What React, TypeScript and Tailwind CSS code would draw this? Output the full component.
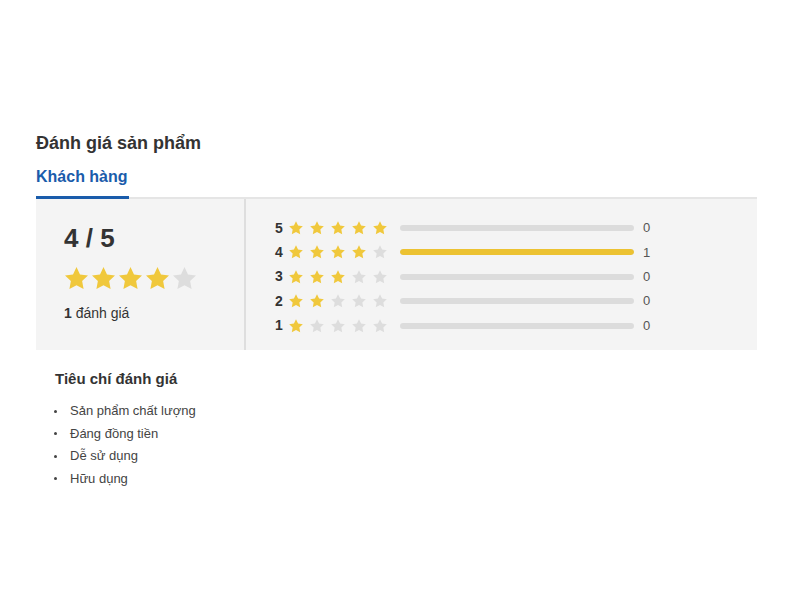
import type React from "react"

const font = { fontFamily: '"Liberation Sans", Arial, sans-serif' }

const Star = ({ filled, size }: { filled: boolean; size: number }) => (
  <svg width={size} height={size} viewBox="0 0 24 24" className="shrink-0">
    <path
      d="M12 1.8l3.1 6.6 7.1.9-5.2 5 1.3 7.1L12 18l-6.3 3.4 1.3-7.1-5.2-5 7.1-.9z"
      fill={filled ? "#f0c83c" : "#dddddd"}
      strokeLinejoin="round"
    />
  </svg>
)

const rows = [
  { stars: 5, count: 0 },
  { stars: 4, count: 1 },
  { stars: 3, count: 0 },
  { stars: 2, count: 0 },
  { stars: 1, count: 0 },
]

const criteria = ["Sản phẩm chất lượng", "Đáng đồng tiền", "Dễ sử dụng", "Hữu dụng"]

const App = () => {
  return (
    <div className="w-[800px] h-[600px] bg-white text-[#333]" style={font as React.CSSProperties}>
      <div className="pt-[131px] pl-[36px] w-[757px]">
        <h2 className="text-[18px] font-bold leading-[24px] text-[#333]">Đánh giá sản phẩm</h2>

        <div className="mt-[10px] border-b-2 border-[#e5e5e5]">
          <div className="inline-block text-[16px] font-bold text-[#1a5cab] leading-[20px] pb-[9px] border-b-[3px] border-[#1a5cab] -mb-[2px] w-[93px]">
            Khách hàng
          </div>
        </div>

        <div className="flex bg-[#f4f4f4] h-[151px]">
          <div className="w-[210px] border-r-2 border-[#dedede] pl-[28px] pt-[24px]">
            <div className="text-[26px] font-bold leading-[30px] text-[#333]">4 / 5</div>
            <div className="flex mt-[12px] -ml-[1px]">
              {[1, 2, 3, 4, 5].map((i) => (
                <Star key={i} filled={i <= 4} size={27} />
              ))}
            </div>
            <div className="mt-[13px] text-[14px] leading-[16px] text-[#333]">
              <span className="font-bold">1</span> đánh giá
            </div>
          </div>

          <div className="flex flex-col pl-[29px] pt-[21px] gap-[8.4px]">
            {rows.map((r) => (
              <div key={r.stars} className="flex items-center h-[16px]">
                <span className="w-[13px] text-[14px] font-bold text-[#333]">{r.stars}</span>
                <div className="flex gap-[5px]">
                  {[1, 2, 3, 4, 5].map((i) => (
                    <Star key={i} filled={i <= r.stars} size={16} />
                  ))}
                </div>
                <div className="ml-[12px] w-[234px] h-[6px] rounded-full bg-[#dcdcdc] overflow-hidden">
                  <div
                    className="h-full rounded-full bg-[#ecc232]"
                    style={{ width: `${r.count * 100}%` }}
                  />
                </div>
                <span className="ml-[9px] text-[13px] text-[#555]">{r.count}</span>
              </div>
            ))}
          </div>
        </div>

        <div className="pl-[19px] pt-[20px]">
          <h3 className="text-[15px] font-bold leading-[18px] text-[#333]">Tiêu chí đánh giá</h3>
          <ul className="mt-[15px] flex flex-col gap-[6.5px]">
            {criteria.map((c) => (
              <li key={c} className="flex items-center text-[13px] leading-[16px] text-[#444]">
                <span className="w-[3px] h-[3px] rounded-full bg-[#444] ml-[-1px] mr-[13px]" />
                {c}
              </li>
            ))}
          </ul>
        </div>
      </div>
    </div>
  )
}

export default App
